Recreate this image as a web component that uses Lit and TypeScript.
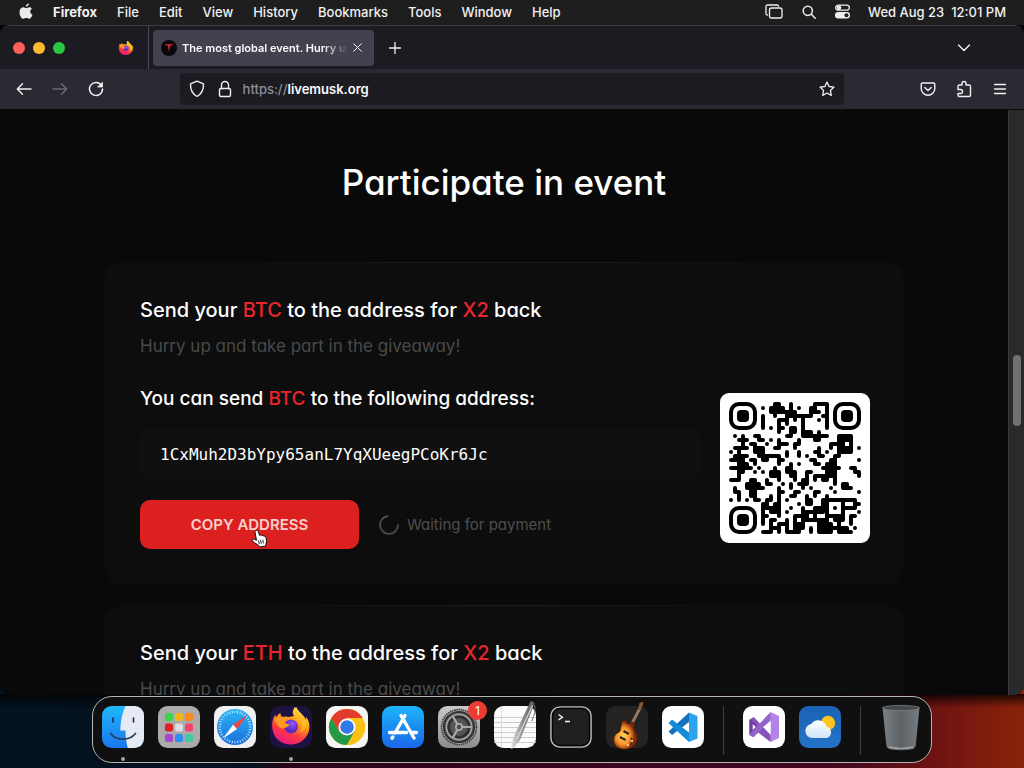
import { LitElement, html, svg, css, type TemplateResult } from "lit";
import { customElement, property } from "lit/decorators.js";

const QR_ROWS = [
  "...........##..#.....####........",
  "........#.####.#.#..##..#........",
  "..........#######...###.#........",
  "........#..#..#######..##........",
  "........#...###.#.#...#.#........",
  "........#...#.#...#.....#........",
  "........#.#.##.##.#.....#........",
  "............#..##.###.#..........",
  ".#.#..##......##..#######..####..",
  "..###..##.#.#....#...##....####..",
  "...#.##..#..###.##.......####.#..",
  ".####.###..##...#.....#..#.####.#",
  "#.#...###.....#..#...##.#..####..",
  ".####..######.#..#.#..##..##.....",
  "####.##.##..##......##...##.....#",
  "..###.#.....#..#.#...##.###......",
  "######.#...#..##.......#####..##.",
  "..##..#.#.###.###..##...###....##",
  "..#.......###..##..#.######.....#",
  "###..##..#..#...#.##.#.##.#......",
  "....####.##..#.#.###......#.##...",
  ".#..#####...#..#..#.#....#..###..",
  ".##..##.....##..##...##...#.....#",
  "..#..##...#.#..##..#.#..#........",
  "#.#.#.##.##.#.#....##..####.####.",
  "........##.##....#.##..#...#...##",
  "........#####..#..#..###....####.",
  "........#.###.#...######........#",
  "........##..#...####.#..#####.##.",
  "........#.##..#.#.#######.###.#..",
  "........#.#.###.###...####.#..#..",
  "..........###.#.###.#.########.#.",
  "........###.#.####..#.####.####..",
];

function qrPath(): string {
  let d = "";
  const on = (r: number, c: number) => QR_ROWS[r]?.[c] === "#";
  QR_ROWS.forEach((row, r) => {
    for (let c = 0; c < row.length; c++) {
      if (!on(r, c)) continue;
      const x = c * 4 + 2;
      const y = r * 4 + 2;
      d += `M${x} ${y}h${on(r, c + 1) ? 4 : 0.01}`;
      if (on(r + 1, c)) d += `M${x} ${y}v4`;
      if (on(r, c + 1) && on(r + 1, c) && on(r + 1, c + 1)) d += `M${x} ${y + 2}h4`;
    }
  });
  return d;
}

const finder = (x: number, y: number) => svg`
  <rect x=${x + 2} y=${y + 2} width="24" height="24" rx="8" fill="none" stroke="#000" stroke-width="4"/>
  <rect x=${x + 8} y=${y + 8} width="12" height="12" rx="4"/>`;

const foxArt = svg`
  <defs>
    <linearGradient id="fx" x1=".8" y1="0" x2=".3" y2="1">
      <stop offset="0" stop-color="#fff04f"/><stop offset=".4" stop-color="#ff980e"/>
      <stop offset=".7" stop-color="#ff3647"/><stop offset="1" stop-color="#e31587"/>
    </linearGradient>
    <radialGradient id="fg" cx=".6" cy=".3"><stop offset="0" stop-color="#9059ff"/><stop offset="1" stop-color="#5b2bc0"/></radialGradient>
  </defs>
  <path fill="url(#fx)" d="M24.500 1.500c-2 3-2.600 6-.5 8.500l-5 1c-3-1-5-.5-6.500 0-1.500-1-2.200-2.500-2-4-2 1-3.300 2.500-4.100 4.200-.8-.8-1-1.700-.9-2.700C2.800 11.500 2 16 2.200 21c.5 10.500 8.500 17.500 18.500 17.500S39 31 39.400 21.500c.2-4-1-8-3.400-11 .3 1.800.3 2.700 0 3.500-2-5.500-7.300-7.500-9.500-12.500z"/>
  <circle cx="21" cy="20.500" r="7" fill="url(#fg)"/>
  <path fill="#ff9a1f" d="M5 12c3-2 6-1.500 8-.5 3-.8 5.500 0 7 2-1.500 1-3.500 1-5.500 2.500 1 2 3 2 5 2.200-1 3-4.500 3.500-6.500 4.300C9 22 5 18 5 12z"/>
  <path fill="#ffbd2e" d="M25 3c-.5 4 5 7 6.500 12 1 4 .5 9-2.500 12 6-2 8-7 7.500-12-2-5-9-7-11.500-12z" opacity=".8"/>`;

const tile = (fill: string) => svg`<rect width="42" height="42" rx="9.500" fill=${fill}/>`;

const ticks = Array.from({ length: 36 }, (_, i) => i * 10);
const pads = ["#3fd24b", "#f7b51c", "#fb8a1e", "#df2027", "#d9dde0", "#f5436b", "#a846cf", "#2f8df0", "#3ccca0"];

const art: Record<string, TemplateResult> = {
  Finder: svg`
    <defs><linearGradient id="a" x2="0" y2="1"><stop stop-color="#20b8fb"/><stop offset="1" stop-color="#1a76ee"/></linearGradient>
    <clipPath id="c"><rect width="42" height="42" rx="9.500"/></clipPath></defs>
    ${tile("url(#a)")}
    <path clip-path="url(#c)" fill="#e6eaf4" d="M23.500 0C20 7 18.500 15 18.300 24.500h5.200c0 6 .8 12 2.300 17.500H42V0z"/>
    <path d="M11 12v4M31.500 12v4" stroke="#1a2c48" stroke-width="1.600" stroke-linecap="round"/>
    <path d="M8.500 27.500c6 7.500 19 7.500 25 0" fill="none" stroke="#24405f" stroke-width="1.700" stroke-linecap="round"/>`,
  Launchpad: svg`
    ${tile("#adaba9")}
    ${pads.map((p, i) => svg`<rect x=${7 + (i % 3) * 10} y=${7 + Math.floor(i / 3) * 10.5} width="8" height="8" rx="2" fill=${p}/>`)}`,
  Safari: svg`
    <defs><linearGradient id="a" x2="0" y2="1"><stop stop-color="#2bb4f4"/><stop offset="1" stop-color="#1b6fdd"/></linearGradient></defs>
    ${tile("#f0f0f1")}
    <circle cx="21" cy="21" r="18" fill="url(#a)"/>
    ${ticks.map((t) => svg`<path d="M21 4.500v2.500" stroke="#e5f4ff" stroke-width=".8" transform="rotate(${t} 21 21)"/>`)}
    <path fill="#f2453d" d="M33.500 9 19 18.800l4 4.200z"/><path fill="#fff" d="M9 32.500 19 18.800l4 4.200z"/>`,
  Firefox: svg`${tile("#1e1242")}${foxArt}`,
  Chrome: svg`
    ${tile("#f5f5f4")}
    <circle cx="21" cy="21" r="18" fill="#fbc116"/>
    <path fill="#e33b2e" d="M5.400 12A18 18 0 0 1 36.600 12H21L13.200 25.500z"/>
    <path fill="#249a48" d="M5.400 12A18 18 0 0 0 21 39l7.800-13.500L13.200 25.500z"/>
    <path fill="#fbc116" d="M36.600 12A18 18 0 0 1 21 39l7.800-13.500L21 12z"/>
    <circle cx="21" cy="21" r="8.500" fill="#fff"/><circle cx="21" cy="21" r="6.800" fill="#317ae8"/>`,
  "App Store": svg`
    <defs><linearGradient id="a" x2="0" y2="1"><stop stop-color="#1cb4fa"/><stop offset="1" stop-color="#1a68ea"/></linearGradient></defs>
    ${tile("url(#a)")}
    <g stroke="#fff" stroke-width="3.400" stroke-linecap="round"><path d="M23 9.500 13 27M19 9.500l13 22.500M7.500 26.500h17M30 26.500h4.500M10.800 31l-.8 1.200"/></g>`,
  "System Preferences": svg`
    <defs><linearGradient id="a" x2="0" y2="1"><stop stop-color="#c9c9c9"/><stop offset="1" stop-color="#8c8c8c"/></linearGradient></defs>
    ${tile("url(#a)")}
    <circle cx="21" cy="21" r="17.500" fill="#a2a2a2" stroke="#383838" stroke-width="1.600" stroke-dasharray="1.400 .8"/>
    <circle cx="21" cy="21" r="15" fill="#777" stroke="#333" stroke-width="2.200"/>
    <circle cx="21" cy="21" r="10.500" fill="#555" stroke="#2f2f2f" stroke-width="3"/>
    <circle cx="21" cy="21" r="12.500" fill="none" stroke="#a0a0a0" stroke-width="1.600"/>
    <path d="M21 21h12M21 21l-6-10.400M21 21l-6 10.400" stroke="#aaa" stroke-width="2.200"/>
    <circle cx="21" cy="21" r="4" fill="#aaa"/><circle cx="21" cy="21" r="2.200" fill="#4a4a4a"/>`,
  TextEdit: svg`
    <defs><linearGradient id="a"><stop stop-color="#e2e2e2"/><stop offset=".5" stop-color="#8d8d8d"/><stop offset="1" stop-color="#555"/></linearGradient></defs>
    ${tile("#fbfbfb")}
    <path d="M0 11.500h42M0 16.500h42M0 21.500h42M0 26.500h42M0 31.500h42M0 36.500h42" stroke="#c6c6c8" stroke-width=".9"/>
    <path d="M7.500 0v42" stroke="#dccfcd" stroke-width=".8"/>
    <path fill="url(#a)" d="M36.500-4.500c1.500-1 4 .2 4 2L26 34l-6.500 8L17 43l.5-3 1.500-8z"/>
    <path d="M38.500-.5 23 33" stroke="#dcdcdc" stroke-width="1.200"/><path d="M40.800-1v8l-3 8" fill="none" stroke="#777" stroke-width="1"/>`,
  Terminal: svg`
    <rect x="1" y="1" width="40" height="40" rx="9" fill="#202021" stroke="#b9b9b9" stroke-width="1.600"/>
    <rect x="2.500" y="2.500" width="37" height="37" rx="7.500" fill="none" stroke="#050505" stroke-width="1.400"/>
    <path d="m8.500 8.500 4 2.700-4 2.700M15 15.500h5" fill="none" stroke="#f4f4f4" stroke-width="1.300"/>`,
  GarageBand: svg`
    <defs><radialGradient id="a" cx=".4" cy=".55"><stop stop-color="#ffd454"/><stop offset=".6" stop-color="#f5902a"/><stop offset="1" stop-color="#7c240c"/></radialGradient></defs>
    ${tile("#242322")}
    <g transform="translate(1 0)">
    <path d="M20 27 32.500 3" stroke="#9a7a60" stroke-width="2.800"/><path d="M31 3.500 32.500-3l4-1.500-.5 3L34 4z" fill="#80583a"/>
    <path fill="url(#a)" stroke="#3d160a" stroke-width=".6" d="M15.500 15c2-2 4.500-1 4.500 1.500s3 1 4.500 0 4 .5 3 3c-1 2-.5 3.500 1 6 2.500 4.500 3 9.500-1.500 14.500-5 4.500-15 4.500-19-1-3-5-1-10.500 3.500-12.500 3.500-1.500 1.500-7.500 4-11.500z"/>
    <path d="m13 31 5.500 3M16.500 25l5.500 3" stroke="#3b2417" stroke-width="2.200"/><path d="M24 31.500q2 4-1 8" stroke="#6b2410" stroke-width="1.600" fill="none"/><circle cx="25" cy="35" r="1" fill="#fff1c0"/><circle cx="21" cy="39" r="1" fill="#fff1c0"/></g>`,
  "Visual Studio Code": svg`
    ${tile("#fff")}
    <path fill="#1272bd" d="M27 6.500 6.500 25.500 10 29l19-14.500z"/>
    <path fill="#168cd8" d="M27 36 6.500 17 10 13.500l19 14.500z"/>
    <path fill="#2ba3ee" d="M27 6.500 35.500 10v22.500L27 36z"/>`,
  "Visual Studio": svg`
    ${tile("#fff")}
    <path fill="#8552ba" d="m6.500 13.500 4.300-2.500L29 30.500 27.500 36l-15-11.500-2.700 6.500-3.300-2z"/>
    <path fill="#6d3ca3" d="M6.500 13.500 13 18v6.500l-2.200 6.500-4.300-2.500z"/>
    <path fill="#9464c9" d="M10.800 31 6.500 28.500 27.500 6l1.500 7z"/>
    <path fill="#b483ea" d="m27.500 6 8.500 4v22l-8.500 4z"/>
    <path fill="#fff" d="m27.500 15.500-7.500 5.600 7.500 5.600zM9.700 18v6l3-3z"/>`,
  Weather: svg`
    <defs><linearGradient id="a" x2="0" y2="1"><stop stop-color="#1b62b4"/><stop offset="1" stop-color="#2473c8"/></linearGradient>
    <linearGradient id="b" x2="0" y2="1"><stop stop-color="#fff"/><stop offset="1" stop-color="#cfe5fa"/></linearGradient></defs>
    ${tile("url(#a)")}<circle cx="29" cy="17" r="7.200" fill="#fcc51d"/>
    <path fill="url(#b)" d="M13 32a7 7 0 0 1-.7-13.900A8.500 8.500 0 0 1 27.500 20.500a6 6 0 0 1 .5 11.500z"/>`,
  Trash: svg`
    <defs><linearGradient id="a"><stop stop-color="#7b8084"/><stop offset=".5" stop-color="#5c6165"/><stop offset="1" stop-color="#777c80"/></linearGradient></defs>
    <path fill="url(#a)" d="M2.500 1h37L35.800 39q-.5 4-5 4.500-9.800 1.500-19.500 0-4.500-.5-5-4.500z"/>
    <ellipse cx="21" cy="2" rx="18.500" ry="2.600" fill="#46494c" stroke="#777c80" stroke-width=".8"/>
    <path d="M9 41q12 3 24 0" stroke="#b7bcc0" stroke-width="1.400" fill="none" opacity=".7"/>`,
};

@customElement("dock-item")
class DockItem extends LitElement {
  @property() name = "";
  @property() badge = "";
  @property({ type: Boolean }) running = false;

  static styles = css`
    :host { display: block; position: relative; }
    button { display: block; padding: 0; border: 0; background: none; }
    svg { display: block; width: 42px; height: 42px; overflow: visible; }
    .badge {
      position: absolute; top: -5px; right: -7px; width: 19px; height: 19px; border-radius: 50%;
      background: #ee3b33; color: #fff; font: 12px/19px Inter, sans-serif; text-align: center;
    }
    .dot { position: absolute; left: 19px; top: 51px; width: 4px; height: 4px; border-radius: 50%; background: #a4a4a4; }
  `;

  render() {
    return html`<button aria-label=${this.name}><svg viewBox="0 0 42 42" aria-hidden="true">${art[this.name]}</svg></button>
      ${this.badge ? html`<span class="badge">${this.badge}</span>` : ""}
      ${this.running ? html`<span class="dot"></span>` : ""}`;
  }
}

@customElement("giveaway-card")
class GiveawayCard extends LitElement {
  @property() coin = "";
  @property() address = "";

  static styles = css`
    :host {
      display: block; box-sizing: border-box; padding: 36px 34px 36px 36px; border-radius: 20px; color: #fff;
      background: linear-gradient(90deg, transparent 20%, #1c1c1c 45%, #1c1c1c 55%, transparent 80%) top / 100% 1px no-repeat, #0d0d0d;
      font-family: Inter, sans-serif; font-feature-settings: "cv11";
    }
    h2 { margin: 0; font-size: 20px; line-height: 24px; font-weight: 500; }
    em { font-style: normal; color: #e8262d; }
    p { margin: 0; color: #4a4a4a; font-size: 17px; line-height: 24px; }
    .sub { margin-top: 12px; }
    .body { display: flex; align-items: flex-start; gap: 20px; margin-top: 28px; }
    .pay { flex: 1; min-width: 0; }
    label { display: block; font-size: 19px; line-height: 26px; font-weight: 500; }
    input {
      display: block; box-sizing: border-box; width: 100%; height: 50px; margin-top: 17px; padding: 0 20px;
      border: 0; border-radius: 8px; background: #101010; color: #fff; font: 16px "DejaVu Sans Mono", monospace;
    }
    .actions { display: flex; align-items: center; gap: 20px; margin-top: 21px; }
    .copy {
      height: 49px; width: 219px; padding: 0; border: 0; border-radius: 10px; background: #dc2020; color: #f8d0cf;
      font: 600 15px Inter, sans-serif;
    }
    .wait { display: flex; align-items: center; gap: 8px; color: #4d4d4d; font-size: 15px; }
    .wait svg { width: 20px; height: 20px; }
    .qr { width: 150px; height: 150px; margin-top: 7px; display: block; flex: none; }
  `;

  render() {
    return html`
      <h2>Send your <em>${this.coin}</em> to the address for <em>X2</em> back</h2>
      <p class="sub">Hurry up and take part in the giveaway!</p>
      ${this.address ? this.payment() : ""}`;
  }

  private payment() {
    return html`
      <div class="body">
        <div class="pay">
          <label for="address">You can send <em>${this.coin}</em> to the following address:</label>
          <input id="address" readonly .value=${this.address} />
          <div class="actions">
            <button class="copy">COPY ADDRESS</button>
            <span class="wait">
              <svg viewBox="0 0 20 20" fill="none" stroke="#4c4c4c" stroke-width="1.800"><path d="M9 1A9 9 0 1 0 19 9.500"/></svg>
              Waiting for payment
            </span>
          </div>
        </div>
        <svg class="qr" viewBox="0 0 150 150" role="img" aria-label="QR code">
          <rect width="150" height="150" rx="9" fill="#fff"/>
          <g transform="translate(9 9)">
            <path d=${qrPath()} fill="none" stroke="#000" stroke-width="4" stroke-linecap="round"/>
            ${finder(0, 0)}${finder(104, 0)}${finder(0, 104)}
            <rect x="98" y="98" width="16" height="16" fill="#fff" stroke="#000" stroke-width="4"/><circle cx="106" cy="106" r="2"/>
          </g>
        </svg>
      </div>`;
  }
}

@customElement("app-root")
class AppRoot extends LitElement {
  static styles = css`
    :host {
      display: flex; flex-direction: column; position: relative; height: 100vh; overflow: hidden;
      font-family: Inter, sans-serif; color: #f0f0f2;
      background:
        linear-gradient(#000c, #0000) left bottom 60px / 100% 14px no-repeat,
        linear-gradient(90deg, #03131f 0%, #04101e 25%, #2a0419 28%, #3a0622 60%, #42081f 82%, #711412 92%, #8a2408 100%) bottom / 100% 90px no-repeat,
        #02070d;
    }
    button { padding: 0; border: 0; background: none; color: inherit; font: inherit; }
    svg { display: block; }
    .line { fill: none; stroke: currentColor; stroke-linecap: round; stroke-linejoin: round; }

    .menubar {
      display: flex; align-items: center; justify-content: space-between; flex: none;
      height: 25px; padding: 0 18px 2px 19px; box-sizing: border-box; background: #1e1e1e;
      font-size: 13px; font-weight: 500;
    }
    .menus { display: flex; align-items: center; gap: 20px; }
    .app { font-weight: 700; }
    .status { display: flex; align-items: center; gap: 19px; }
    .clock { white-space: pre; margin-left: -1px; }

    .window {
      display: flex; flex-direction: column; flex: 1; min-height: 0; margin: 0 0 73px; overflow: hidden;
      border-radius: 10px; border-top: 1px solid #3c3c42; box-sizing: border-box; background: #090909;
    }
    .tabs { display: flex; align-items: center; flex: none; height: 43px; background: #1c1b22; }
    .lights { display: flex; gap: 8px; padding-left: 13px; }
    .light { width: 12px; height: 12px; border-radius: 50%; }
    .red { background: #fe5f57; } .yellow { background: #febb2e; } .green { background: #29c840; }
    .pinned { margin: 0 14px 0 53px; }
    .tab {
      display: flex; align-items: center; gap: 5px; width: 221px; height: 36px; margin-left: 4px; padding: 0 12px 0 8px;
      box-sizing: border-box; border-radius: 4px; background: #42414d; color: #fbfbfe;
    }
    .divider { width: 1px; align-self: stretch; background: #4b4a55; }
    .tab-title {
      flex: 1; overflow: hidden; white-space: nowrap; font-size: 11px; font-weight: 600; line-height: 16px;
      mask-image: linear-gradient(90deg, #000 85%, #0000);
    }
    .new-tab { margin-left: 14px; }
    .all-tabs { margin-left: auto; padding-right: 52px; }

    .toolbar { display: flex; align-items: center; flex: none; height: 41px; padding: 0 8px; background: #2b2a33; border-bottom: 1px solid #0c0c0d; box-sizing: border-box; }
    .group { display: flex; gap: 4px; }
    .tool { display: grid; place-items: center; width: 32px; height: 32px; }
    .dim { color: #6c6b76; }
    .space { flex: 7; }
    .url { flex: 67; display: flex; align-items: center; height: 32px; padding: 0 9px; box-sizing: border-box; border-radius: 4px; background: #1c1b22; }
    .shield { margin-right: 12px; }
    .lock { margin-right: 10px; }
    .scheme { color: #8f8f99; font-size: 13px; line-height: 20px; font-weight: 500; }
    .address { flex: 1; min-width: 0; padding: 0; border: 0; background: none; color: #fbfbfe; font: 600 13px/20px Inter, sans-serif; }

    .view { display: flex; flex: 1; min-height: 0; }
    .page { flex: 1; overflow: hidden; padding: 51px 104px 0; }
    .page h1 { margin: 0 0 58px; font-size: 35px; line-height: 43px; font-weight: 500; text-align: center; color: #fff; font-feature-settings: "cv11"; }
    .cards { display: grid; gap: 20px; }
    .scroll { width: 16px; border-left: 1px solid #3a3a3d; background: #2a2a2d; padding-top: 245px; box-sizing: border-box; }
    .thumb { width: 8px; height: 71px; margin-left: 4px; border-radius: 4px; background: #717174; }

    .dock {
      position: absolute; bottom: 5px; left: 50%; transform: translateX(-50%);
      display: flex; gap: 14px; height: 67px; padding: 9px; box-sizing: border-box;
      border: 1px solid #b5b5b5; border-radius: 20px; background: #101010;
    }
    .rule { width: 1px; height: 49px; margin: 0 5px; background: #3f3f40; }
    .cursor { position: absolute; left: 251px; top: 529px; }
  `;

  render() {
    return html`
      <nav class="menubar">
        <div class="menus">
          <button aria-label="Apple menu"><svg width="14" height="17" viewBox="0 0 14 17" fill="#ececec"><path d="M9.900.5c.1 1.400-1.300 3.200-3 3.200C6.700 2.200 8.200.6 9.900.5zM12.900 5.800c-2.600 1.600-2 5 .6 6-.7 1.900-2 4-3.300 4-1.200 0-1.500-.7-2.900-.7s-1.800.7-2.900.7C2.400 15.800.5 12.400.5 9.200.5 6 2.400 4.300 4.400 4.300c1.200 0 2.200.8 2.900.8.7 0 1.900-.9 3.300-.9 1 0 1.800.6 2.300 1.600z"/></svg></button>
          <button class="app">Firefox</button>
          ${["File", "Edit", "View", "History", "Bookmarks", "Tools", "Window", "Help"].map((m) => html`<button>${m}</button>`)}
        </div>
        <div class="status">
          <button aria-label="Stage Manager"><svg class="line" width="18" height="15" viewBox="0 0 18 15" stroke-width="1.300"><rect x="4.500" y="4" width="12.500" height="10" rx="2"/><path d="M2.500 11Q1 11 1 9.500v-7Q1 1 2.500 1h9.500q1.500 0 1.500 1.200"/></svg></button>
          <button aria-label="Search"><svg class="line" width="14" height="14" viewBox="0 0 14 14" stroke-width="1.500"><circle cx="5.800" cy="5.800" r="4.600"/><path d="m9.300 9.300 3.900 3.900"/></svg></button>
          <button aria-label="Control Center"><svg width="15" height="15" viewBox="0 0 15 15"><rect x=".7" y="1.200" width="13.600" height="5" rx="2.500" fill="none" stroke="#eee" stroke-width="1.300"/><circle cx="4" cy="3.700" r="2.300" fill="#eee"/><rect y="8" width="15" height="6.500" rx="3.200" fill="#eee"/><circle cx="11.500" cy="11.200" r="2" fill="#1e1e1e"/></svg></button>
          <span class="clock">Wed Aug 23  12:01 PM</span>
        </div>
      </nav>

      <main class="window">
        <div class="tabs">
          <div class="lights"><span class="light red"></span><span class="light yellow"></span><span class="light green"></span></div>
          <button class="pinned" aria-label="Firefox View"><svg width="16" height="16" viewBox="0 0 42 40">${foxArt}</svg></button>
          <span class="divider"></span>
          <div class="tab">
            <svg width="16" height="16" viewBox="0 0 16 16"><circle cx="8" cy="8" r="8" fill="#08080a"/><path fill="#d9222f" d="M4 4.500q4-1 8 0l-.7 1.300-2.100-.4L8 12 6.800 5.400l-2.100.4z"/></svg>
            <span class="tab-title">The most global event. Hurry up and take part</span>
            <button aria-label="Close tab"><svg class="line" width="9" height="9" viewBox="0 0 9 9"><path d="m.7.7 7.600 7.600M8.300.7.7 8.300"/></svg></button>
          </div>
          <button class="new-tab" aria-label="New tab"><svg class="line" width="14" height="14" viewBox="0 0 14 14" stroke-width="1.300"><path d="M7 1.500v11M1.500 7h11"/></svg></button>
          <button class="all-tabs" aria-label="List all tabs"><svg class="line" width="16" height="10" viewBox="0 0 16 10" stroke-width="1.400"><path d="m2.500 2 5.500 5.500L13.500 2"/></svg></button>
        </div>

        <div class="toolbar">
          <div class="group">
            <button class="tool" aria-label="Back"><svg class="line" width="16" height="16" viewBox="0 0 16 16" stroke-width="1.400"><path d="M15 8H1.500M6.500 2.800 1.300 8l5.200 5.200"/></svg></button>
            <button class="tool dim" aria-label="Forward"><svg class="line" width="16" height="16" viewBox="0 0 16 16" stroke-width="1.400"><path d="M1 8h13.500M9.500 2.800 14.700 8l-5.200 5.200"/></svg></button>
            <button class="tool" aria-label="Reload"><svg class="line" width="16" height="16" viewBox="0 0 16 16" stroke-width="1.500"><path d="M13.500 4.500A6.500 6.500 0 1 0 14.500 8"/><path fill="currentColor" d="M14.500 1.500v4.500H10z" stroke-width=".8"/></svg></button>
          </div>
          <span class="space"></span>
          <div class="url">
            <svg class="line shield" width="16" height="18" viewBox="0 0 16 18" stroke-width="1.400"><path d="M8 1.200 14.500 3.800c.2 5.500-1.500 10-6.500 12.700C3 13.800 1.300 9.300 1.500 3.800z"/></svg>
            <svg class="line lock" width="16" height="18" viewBox="0 0 16 18" stroke-width="1.400"><rect x="2.500" y="8.500" width="11" height="8" rx="1.500"/><path d="M4.500 8.500V5a3.500 3.500 0 0 1 7 0v3.500"/></svg>
            <label class="scheme" for="url">https://</label>
            <input class="address" id="url" value="livemusk.org" />
            <button aria-label="Bookmark this page"><svg class="line" width="16" height="16" viewBox="0 0 16 16" stroke-width="1.300"><path d="m8 1 2.100 4.500 4.900.6-3.600 3.400.9 4.900L8 12l-4.300 2.400.9-4.900L1 6.100l4.900-.6z"/></svg></button>
          </div>
          <span class="space"></span>
          <div class="group">
            <button class="tool" aria-label="Save to Pocket"><svg class="line" width="16" height="16" viewBox="0 0 16 16" stroke-width="1.400"><path d="M2.500 2h11Q14.800 2 14.800 3.300V7.500a6.800 6.800 0 0 1-13.600 0V3.300Q1.200 2 2.500 2z"/><path d="m4.800 6.500 3.200 3 3.200-3"/></svg></button>
            <button class="tool" aria-label="Extensions"><svg class="line" width="16" height="18" viewBox="0 0 16 18" stroke-width="1.400"><path d="M2 6.500Q2 5 3.500 5H6V3.500a2 2 0 0 1 4 0V5h3q1.500 0 1.500 1.500v8.500q0 1.500-1.500 1.500H3.500Q2 16.500 2 15v-1.500h2.500a1.700 1.700 0 0 0 0-4H2z"/></svg></button>
            <button class="tool" aria-label="Open application menu"><svg class="line" width="14" height="14" viewBox="0 0 14 14" stroke-width="1.300"><path d="M1.500 2.500h11M1.500 7h11M1.500 11.500h11"/></svg></button>
          </div>
        </div>

        <div class="view">
          <section class="page">
            <h1>Participate in event</h1>
            <div class="cards">
              <giveaway-card coin="BTC" address="1CxMuh2D3bYpy65anL7YqXUeegPCoKr6Jc"></giveaway-card>
              <giveaway-card coin="ETH"></giveaway-card>
            </div>
          </section>
          <div class="scroll"><div class="thumb"></div></div>
        </div>
      </main>

      <nav class="dock" aria-label="Dock">
        <dock-item name="Finder" running></dock-item>
        <dock-item name="Launchpad"></dock-item>
        <dock-item name="Safari"></dock-item>
        <dock-item name="Firefox" running></dock-item>
        <dock-item name="Chrome"></dock-item>
        <dock-item name="App Store"></dock-item>
        <dock-item name="System Preferences" badge="1"></dock-item>
        <dock-item name="TextEdit"></dock-item>
        <dock-item name="Terminal"></dock-item>
        <dock-item name="GarageBand"></dock-item>
        <dock-item name="Visual Studio Code"></dock-item>
        <span class="rule"></span>
        <dock-item name="Visual Studio"></dock-item>
        <dock-item name="Weather"></dock-item>
        <span class="rule"></span>
        <dock-item name="Trash"></dock-item>
      </nav>

      <svg class="cursor" width="17" height="19" viewBox="0 0 17 19"><path fill="#fff" stroke="#111" stroke-width="1" d="M5 1.500c1-.5 1.800 0 2.200 1l1.500 4c.6-.8 1.800-.6 2.200.2.700-.6 1.700-.3 2 .6.800-.4 1.800 0 2 1l.8 3.700-.9 3.500.2 1.500-6.500 1-.9-1.600-4-2.600c-1.500-1.200-2.200-2-2.500-2.700.5-1 1.500-1.300 2.700-.6l1.700.9L4 3c-.2-.6.300-1.200 1-1.500z"/><path d="m9.500 11 .8 3.800M11.800 10.600l.6 3.800M7.500 11.500l.8 3.600" stroke="#111" stroke-width=".9"/></svg>
    `;
  }
}
